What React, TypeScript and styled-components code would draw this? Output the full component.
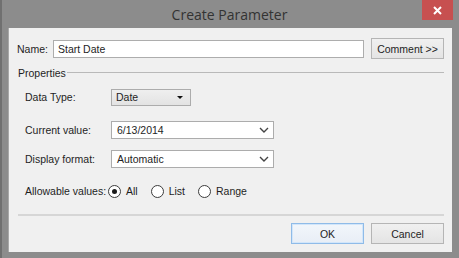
import styled, { createGlobalStyle } from "styled-components";

const GlobalStyle = createGlobalStyle`
	html, body {
		margin: 0;
		padding: 0;
		background: #8c8c8c;
	}
	body {
		font-family: "Liberation Sans", Arial, sans-serif;
		font-size: 10.5px;
		color: #1e1e1e;
	}
`;

const Window = styled.div`
	width: 459px;
	height: 258px;
	box-sizing: border-box;
	background: #8c8c8c;
	border-left: 2px solid #707070;
	display: flex;
	flex-direction: column;
`;

const TitleBar = styled.div`
	height: 28px;
	display: grid;
	grid-template-columns: 1fr auto 1fr;
	align-items: start;
`;

const Title = styled.div`
	grid-column: 2;
	font-family: "Open Sans", "Noto Sans", sans-serif;
	font-size: 14px;
	line-height: 29px;
	color: #333;
	padding-right: 2px;
`;

const CloseButton = styled.div`
	grid-column: 3;
	justify-self: end;
	width: 31px;
	height: 20px;
	margin-right: 6px;
	background: #c75050;
	display: flex;
	align-items: center;
	justify-content: center;
`;

const Client = styled.div`
	flex: 1;
	margin: 0 7px 6px 6px;
	background: #f0f0f0;
	border-left: 1px solid #a8a8a8;
	display: flex;
	flex-direction: column;
	padding: 10px 8px 0 8px;
`;

const NameRow = styled.div`
	display: flex;
	align-items: center;
	height: 21px;
`;

const NameLabel = styled.span`
	width: 36px;
	flex-shrink: 0;
`;

const TextInput = styled.div`
	width: 311px;
	height: 18px;
	box-sizing: border-box;
	border: 1px solid #adadad;
	background: #fff;
	padding-left: 4px;
	line-height: 16px;
`;

const Button = styled.div<{ $default?: boolean }>`
	width: 73px;
	height: 21px;
	box-sizing: border-box;
	border: 1px solid ${(p) => (p.$default ? "#8fbbe8" : "#b5b5b5")};
	background: ${(p) =>
		p.$default
			? "linear-gradient(#f2f6fb, #e8eef6)"
			: "linear-gradient(#f0f0f0, #e4e4e4)"};
	box-shadow: ${(p) => (p.$default ? "inset 0 0 0 1px #d2e6fa" : "none")};
	display: flex;
	align-items: center;
	justify-content: center;
	margin-left: ${(p) => (p.$default ? "0" : "7px")};
`;

const GroupHeader = styled.div`
	display: flex;
	align-items: center;
	margin-top: 5px;
	height: 17px;
	padding-left: 1px;
`;

const GroupLine = styled.div`
	flex: 1;
	height: 1px;
	background: #b9b9b9;
	margin-left: 1px;
	margin-top: -1px;
`;

const Row = styled.div<{ $gap: number }>`
	display: flex;
	align-items: center;
	margin-top: ${(p) => p.$gap}px;
	padding-left: 8px;
	height: 18px;
`;

const RowLabel = styled.span`
	width: 86px;
	flex-shrink: 0;
`;

const DropButton = styled.div`
	width: 80px;
	height: 17px;
	box-sizing: border-box;
	border: 1px solid #acacac;
	background: linear-gradient(#efefef, #e3e3e3);
	display: flex;
	align-items: center;
	justify-content: space-between;
	padding: 0 7px 0 4px;
`;

const Triangle = styled.span`
	width: 0;
	height: 0;
	border-left: 3px solid transparent;
	border-right: 3px solid transparent;
	border-top: 3px solid #111;
`;

const Combo = styled.div`
	width: 163px;
	height: 18px;
	box-sizing: border-box;
	border: 1px solid #acacac;
	background: #fff;
	display: flex;
	align-items: center;
	justify-content: space-between;
	padding: 0 4px 0 5px;
`;

const RadioGroup = styled.div`
	display: flex;
	align-items: center;
	margin-left: -3px;
`;

const RadioItem = styled.label`
	display: flex;
	align-items: center;
	margin-right: 13px;
`;

const RadioCircle = styled.span<{ $checked?: boolean }>`
	width: 11px;
	height: 11px;
	border-radius: 50%;
	border: 1px solid #3c3c3c;
	background: #fff;
	display: flex;
	align-items: center;
	justify-content: center;
	margin-right: 5px;

	&::after {
		content: "";
		width: 5px;
		height: 5px;
		border-radius: 50%;
		background: ${(p) => (p.$checked ? "#1a1a1a" : "transparent")};
	}
`;

const Separator = styled.div`
	height: 2px;
	background: #d6d6d6;
	margin: 14px 0 0 1px;
`;

const Footer = styled.div`
	display: flex;
	justify-content: flex-end;
	margin-top: 7px;
`;

const Chevron = () => (
	<svg width="10" height="6" viewBox="0 0 10 6">
		<path d="M1 1 L5 5 L9 1" fill="none" stroke="#444" strokeWidth="1.4" />
	</svg>
);

const App = () => {
	return (
		<>
			<GlobalStyle />
			<Window>
				<TitleBar>
					<Title>Create Parameter</Title>
					<CloseButton>
						<svg width="9" height="9" viewBox="0 0 9 9">
							<path d="M1 1 L8 8 M8 1 L1 8" stroke="#fff" strokeWidth="2" />
						</svg>
					</CloseButton>
				</TitleBar>
				<Client>
					<NameRow>
						<NameLabel>Name:</NameLabel>
						<TextInput>Start Date</TextInput>
						<Button>Comment &gt;&gt;</Button>
					</NameRow>
					<GroupHeader>
						Properties
						<GroupLine />
					</GroupHeader>
					<Row $gap={7}>
						<RowLabel>Data Type:</RowLabel>
						<DropButton>
							Date
							<Triangle />
						</DropButton>
					</Row>
					<Row $gap={15}>
						<RowLabel>Current value:</RowLabel>
						<Combo>
							6/13/2014
							<Chevron />
						</Combo>
					</Row>
					<Row $gap={11}>
						<RowLabel>Display format:</RowLabel>
						<Combo>
							Automatic
							<Chevron />
						</Combo>
					</Row>
					<Row $gap={14}>
						<RowLabel>Allowable values:</RowLabel>
						<RadioGroup>
							<RadioItem>
								<RadioCircle $checked />
								All
							</RadioItem>
							<RadioItem>
								<RadioCircle />
								List
							</RadioItem>
							<RadioItem>
								<RadioCircle />
								Range
							</RadioItem>
						</RadioGroup>
					</Row>
					<Separator />
					<Footer>
						<Button $default>OK</Button>
						<Button>Cancel</Button>
					</Footer>
				</Client>
			</Window>
		</>
	);
};

export default App;
